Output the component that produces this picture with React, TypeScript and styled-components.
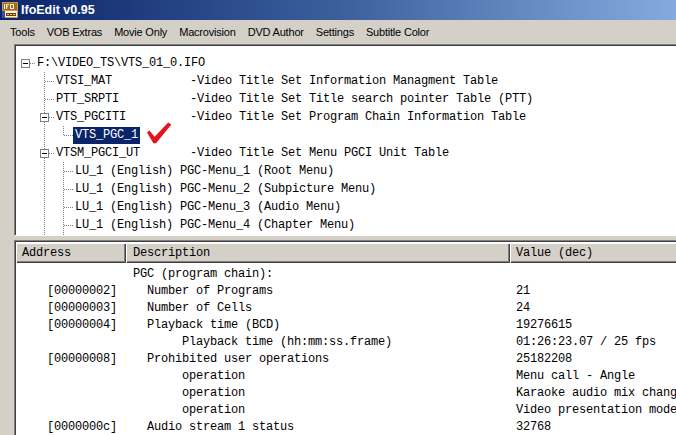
import styled, { createGlobalStyle } from "styled-components";

const GlobalStyle = createGlobalStyle`
  html, body {
    margin: 0;
    padding: 0;
  }
  body {
    width: 676px;
    height: 435px;
    overflow: hidden;
    background: #d4d0c8;
    font-family: "Liberation Sans", Arial, sans-serif;
  }
`;

type Conn = "root" | "tee" | "corner";

interface TreeItem {
  guides: boolean[];
  conn: Conn;
  box?: boolean;
  name: string;
  desc?: string;
  selected?: boolean;
  check?: boolean;
}

const treeRows: TreeItem[] = [
  { guides: [], conn: "root", box: true, name: "F:\\VIDEO_TS\\VTS_01_0.IFO" },
  { guides: [false], conn: "tee", name: "VTSI_MAT", desc: "-Video Title Set Information Managment Table" },
  { guides: [false], conn: "tee", name: "PTT_SRPTI", desc: "-Video Title Set Title search pointer Table (PTT)" },
  { guides: [false], conn: "tee", box: true, name: "VTS_PGCITI", desc: "-Video Title Set Program Chain Information Table" },
  { guides: [false, true], conn: "corner", name: "VTS_PGC_1", selected: true, check: true },
  { guides: [false], conn: "tee", box: true, name: "VTSM_PGCI_UT", desc: "-Video Title Set Menu PGCI Unit Table" },
  { guides: [false, true], conn: "tee", name: "LU_1 (English) PGC-Menu_1 (Root Menu)" },
  { guides: [false, true], conn: "tee", name: "LU_1 (English) PGC-Menu_2 (Subpicture Menu)" },
  { guides: [false, true], conn: "tee", name: "LU_1 (English) PGC-Menu_3 (Audio Menu)" },
  { guides: [false, true], conn: "tee", name: "LU_1 (English) PGC-Menu_4 (Chapter Menu)" },
  // next row is scrolled out of view, only its guide lines peek in
  { guides: [false, true], conn: "tee", name: "" },
];

const listRows = [
  { addr: "", desc: "PGC (program chain):", indent: 0, value: "" },
  { addr: "[00000002]", desc: "Number of Programs", indent: 14, value: "21" },
  { addr: "[00000003]", desc: "Number of Cells", indent: 14, value: "24" },
  { addr: "[00000004]", desc: "Playback time (BCD)", indent: 14, value: "19276615" },
  { addr: "", desc: "Playback time (hh:mm:ss.frame)", indent: 49, value: "01:26:23.07 / 25 fps" },
  { addr: "[00000008]", desc: "Prohibited user operations", indent: 14, value: "25182208" },
  { addr: "", desc: "operation", indent: 49, value: "Menu call - Angle" },
  { addr: "", desc: "operation", indent: 49, value: "Karaoke audio mix change" },
  { addr: "", desc: "operation", indent: 49, value: "Video presentation mode change" },
  { addr: "[0000000c]", desc: "Audio stream 1 status", indent: 14, value: "32768" },
];

const menus = ["Tools", "VOB Extras", "Movie Only", "Macrovision", "DVD Author", "Settings", "Subtitle Color"];

const AppIcon = () => (
  <svg width="16" height="16" viewBox="0 0 16 16">
    <rect x="0" y="0" width="16" height="16" fill="#c79a4e" />
    <rect x="1" y="1" width="14" height="7" fill="#9c6a24" />
    <rect x="2" y="2" width="1" height="5" fill="#fff3c0" />
    <rect x="4" y="2" width="3" height="1" fill="#fff3c0" />
    <rect x="4" y="2" width="1" height="5" fill="#fff3c0" />
    <rect x="4" y="4" width="2" height="1" fill="#fff3c0" />
    <rect x="8" y="2" width="4" height="5" fill="#fff3c0" />
    <rect x="9" y="3" width="2" height="3" fill="#9c6a24" />
    <rect x="3" y="9" width="12" height="6" fill="#f4f0e6" />
    <rect x="4" y="11" width="10" height="3" fill="#6b3b18" />
    <rect x="5" y="12" width="2" height="1" fill="#f0c040" />
    <rect x="8" y="12" width="2" height="1" fill="#f0c040" />
    <rect x="11" y="12" width="2" height="1" fill="#f0c040" />
    <rect x="0" y="9" width="3" height="7" fill="#3a4f9a" />
  </svg>
);

const Connector = ({ conn, box }: { conn: Conn; box?: boolean }) => (
  <svg width="19" height="18" viewBox="0 0 19 18">
    {conn === "tee" && (
      <line x1="9.5" y1="0" x2="9.5" y2="18" stroke="#808080" strokeDasharray="1 1" />
    )}
    {conn === "corner" && (
      <line x1="9.5" y1="0" x2="9.5" y2="9" stroke="#808080" strokeDasharray="1 1" />
    )}
    <line x1="10" y1="9.5" x2="19" y2="9.5" stroke="#808080" strokeDasharray="1 1" />
    {box && (
      <>
        <rect x="5.5" y="5.5" width="8" height="8" fill="#fff" stroke="#808080" />
        <line x1="7" y1="9.5" x2="12" y2="9.5" stroke="#000" />
      </>
    )}
  </svg>
);

const Guide = ({ on }: { on: boolean }) => (
  <svg width="19" height="18" viewBox="0 0 19 18">
    {on && <line x1="9.5" y1="0" x2="9.5" y2="18" stroke="#808080" strokeDasharray="1 1" />}
  </svg>
);

const CheckMark = () => (
  <Check width="26" height="22" viewBox="0 0 26 22">
    <path
      d="M1 10.5 L3.4 8.4 L8.6 14.8 L22.2 0.4 L25.4 2.6 L10 21.2 L7.4 21.2 Z"
      fill="#e4141c"
    />
  </Check>
);

const App = () => {
  return (
    <Window>
      <GlobalStyle />
      <TitleBar>
        <AppIcon />
        <TitleText>IfoEdit v0.95</TitleText>
      </TitleBar>
      <MenuBar>
        {menus.map((m) => (
          <MenuItem key={m}>{m}</MenuItem>
        ))}
      </MenuBar>
      <Body>
        <TreePanel>
          {treeRows.map((r, i) => (
            <TreeRow key={i}>
              {r.guides.map((g, j) => (
                <Guide key={j} on={g} />
              ))}
              <Connector conn={r.conn} box={r.box} />
              {r.name && (
                <Name $wide={!!r.desc} $selected={!!r.selected}>
                  {r.name}
                </Name>
              )}
              {r.desc && <Desc>{r.desc}</Desc>}
              {r.check && <CheckMark />}
            </TreeRow>
          ))}
        </TreePanel>
        <ListPanel>
          <Header>
            <HeadCell $width={110}>Address</HeadCell>
            <HeadCell $width={384} $pad={7}>Description</HeadCell>
            <HeadCell $width={300}>Value (dec)</HeadCell>
          </Header>
          <Rows>
            {listRows.map((r, i) => (
              <ListRow key={i}>
                <AddrCell>{r.addr}</AddrCell>
                <DescCell style={{ paddingLeft: 7 + r.indent }}>{r.desc}</DescCell>
                <ValueCell>{r.value}</ValueCell>
              </ListRow>
            ))}
          </Rows>
        </ListPanel>
      </Body>
    </Window>
  );
};

const Window = styled.div`
  width: 676px;
  height: 435px;
  display: flex;
  flex-direction: column;
  background: #d4d0c8;
  overflow: hidden;
`;

const TitleBar = styled.div`
  height: 20px;
  flex-shrink: 0;
  display: flex;
  align-items: center;
  gap: 3px;
  padding-left: 2px;
  background: linear-gradient(to right, #0a246a 0%, #3c5f9c 50%, #86aadf 100%);
`;

const TitleText = styled.span`
  color: #fff;
  font: bold 12.5px "Liberation Sans", Arial, sans-serif;
  white-space: nowrap;
`;

const MenuBar = styled.div`
  height: 23px;
  flex-shrink: 0;
  display: flex;
  align-items: center;
  padding-left: 4px;
  box-sizing: border-box;
`;

const MenuItem = styled.span`
  padding: 0 6px;
  color: #000;
  font-size: 11px;
  letter-spacing: -0.2px;
  white-space: nowrap;
`;

const Body = styled.div`
  flex: 1;
  min-height: 0;
  display: flex;
  flex-direction: column;
  gap: 4px;
  padding: 1px 0 0 14px;
  font: 12px "Liberation Mono", "Courier New", monospace;
  letter-spacing: -0.2px;
  color: #000;
`;

const TreePanel = styled.div`
  height: 192px;
  flex-shrink: 0;
  margin-right: -10px;
  box-sizing: border-box;
  background: #fff;
  border-top: 1px solid #808080;
  border-left: 1px solid #808080;
  border-bottom: 1px solid #fff;
  box-shadow: inset 1px 1px 0 #404040;
  padding: 9px 0 0 1px;
  overflow: hidden;
`;

const TreeRow = styled.div`
  height: 18px;
  flex-shrink: 0;
  display: flex;
  align-items: center;
  white-space: pre;
`;

const Name = styled.span<{ $wide: boolean; $selected: boolean }>`
  padding: 0 2px;
  line-height: 17px;
  min-width: ${(p) => (p.$wide ? "136px" : "0")};
  box-sizing: border-box;
  background: ${(p) => (p.$selected ? "#0a246a" : "transparent")};
  color: ${(p) => (p.$selected ? "#fff" : "#000")};
`;

const Desc = styled.span`
  line-height: 17px;
`;

const Check = styled.svg`
  margin-left: 6px;
  position: relative;
  top: -2px;
  overflow: visible;
`;

const ListPanel = styled.div`
  flex: 1;
  min-height: 0;
  margin-right: -10px;
  background: #fff;
  border-top: 1px solid #808080;
  border-left: 1px solid #808080;
  box-shadow: inset 1px 1px 0 #404040;
  padding: 2px 0 0 1px;
  overflow: hidden;
`;

const Header = styled.div`
  height: 20px;
  display: flex;
`;

const HeadCell = styled.div<{ $width: number; $pad?: number }>`
  width: ${(p) => p.$width}px;
  flex-shrink: 0;
  box-sizing: border-box;
  padding-left: ${(p) => p.$pad ?? 6}px;
  display: flex;
  align-items: center;
  background: #d4d0c8;
  box-shadow: inset 1px 1px 0 #fff, inset -1px -1px 0 #404040, inset -2px -2px 0 #808080;
  white-space: pre;
`;

const Rows = styled.div`
  padding-top: 2px;
`;

const ListRow = styled.div`
  height: 17px;
  display: flex;
  align-items: center;
  white-space: pre;
`;

const AddrCell = styled.div`
  width: 110px;
  flex-shrink: 0;
  box-sizing: border-box;
  padding-right: 9px;
  text-align: right;
`;

const DescCell = styled.div`
  width: 384px;
  flex-shrink: 0;
  box-sizing: border-box;
  overflow: hidden;
`;

const ValueCell = styled.div`
  padding-left: 6px;
  white-space: pre;
`;

export default App;
